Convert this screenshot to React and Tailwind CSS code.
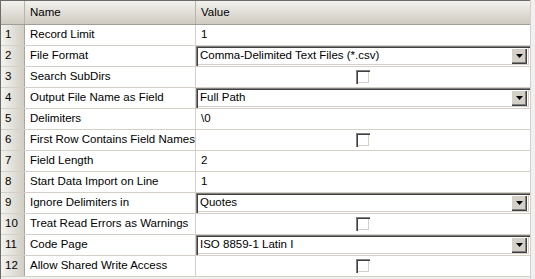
import React from 'react';

const rows = [
  { name: 'Record Limit', type: 'text', value: '1' },
  { name: 'File Format', type: 'select', value: 'Comma-Delimited Text Files (*.csv)' },
  { name: 'Search SubDirs', type: 'check' },
  { name: 'Output File Name as Field', type: 'select', value: 'Full Path' },
  { name: 'Delimiters', type: 'text', value: '\\0' },
  { name: 'First Row Contains Field Names', type: 'check' },
  { name: 'Field Length', type: 'text', value: '2' },
  { name: 'Start Data Import on Line', type: 'text', value: '1' },
  { name: 'Ignore Delimiters in', type: 'select', value: 'Quotes' },
  { name: 'Treat Read Errors as Warnings', type: 'check' },
  { name: 'Code Page', type: 'select', value: 'ISO 8859-1 Latin I' },
  { name: 'Allow Shared Write Access', type: 'check' },
];

// sunken combo box with the classic dropdown button
const Select = ({ value }) => (
  <div className="flex h-full w-full items-center bg-white pl-[4px] pr-[3px] shadow-[inset_1px_1px_0_#808080,inset_2px_2px_0_#404040,inset_-1px_-1px_0_#ffffff,inset_-2px_-2px_0_#d4d0c8]">
    <span className="flex-1 truncate text-black">{value}</span>
    <div className="flex h-[16px] w-[16px] items-center justify-center bg-[#d4d0c8] shadow-[inset_1px_1px_0_#ffffff,inset_-1px_-1px_0_#404040,inset_-2px_-2px_0_#808080]">
      <svg width="7" height="4" viewBox="0 0 7 4">
        <path d="M0 0h7L3.5 4z" fill="#000" />
      </svg>
    </div>
  </div>
);

const Check = () => (
  <div className="flex h-full w-full items-center justify-center">
    <div className="h-[14px] w-[14px] bg-white shadow-[inset_1px_1px_0_#808080,inset_2px_2px_0_#404040,inset_-1px_-1px_0_#ffffff,inset_-2px_-2px_0_#d4d0c8]" />
  </div>
);

export default function App() {
  return (
    <div className="flex h-[279px] w-[535px] bg-[#f0f0f0] font-['Liberation_Sans',Arial,sans-serif] text-[11.5px] leading-none whitespace-nowrap text-black">
      <div className="flex w-[530px] flex-col border-l border-t border-[#6b6b6b]">
        {/* header */}
        <div className="grid h-[24px] grid-cols-[24px_171px_1fr] border-b border-[#a09d94] bg-gradient-to-b from-[#f3f2ee] to-[#cfcbc1]">
          <div className="border-r border-[#b8b4aa]" />
          <div className="flex items-center border-r border-[#b8b4aa] pl-[5px]">Name</div>
          <div className="flex items-center pl-[5px]">Value</div>
        </div>
        {/* rows */}
        {rows.map((r, i) => (
          <div key={i} className="grid h-[21px] grid-cols-[24px_171px_1fr] border-b border-[#d4d0c8] bg-white">
            <div className="flex items-center border-r border-[#a8a59c] bg-gradient-to-r from-[#f4f3ef] to-[#d2cec5] pl-[4px]">
              {i + 1}
            </div>
            <div className="flex items-center overflow-hidden border-r border-[#d4d0c8] pl-[5px]">{r.name}</div>
            <div className="flex items-center">
              {r.type === 'text' && <span className="pl-[5px]">{r.value}</span>}
              {r.type === 'select' && <Select value={r.value} />}
              {r.type === 'check' && <Check />}
            </div>
          </div>
        ))}
        <div className="flex-1 bg-[#f0f0f0]" />
      </div>
      <div className="w-[5px] border-l border-[#d4d0c8] bg-[#f0f0f0]" />
    </div>
  );
}
